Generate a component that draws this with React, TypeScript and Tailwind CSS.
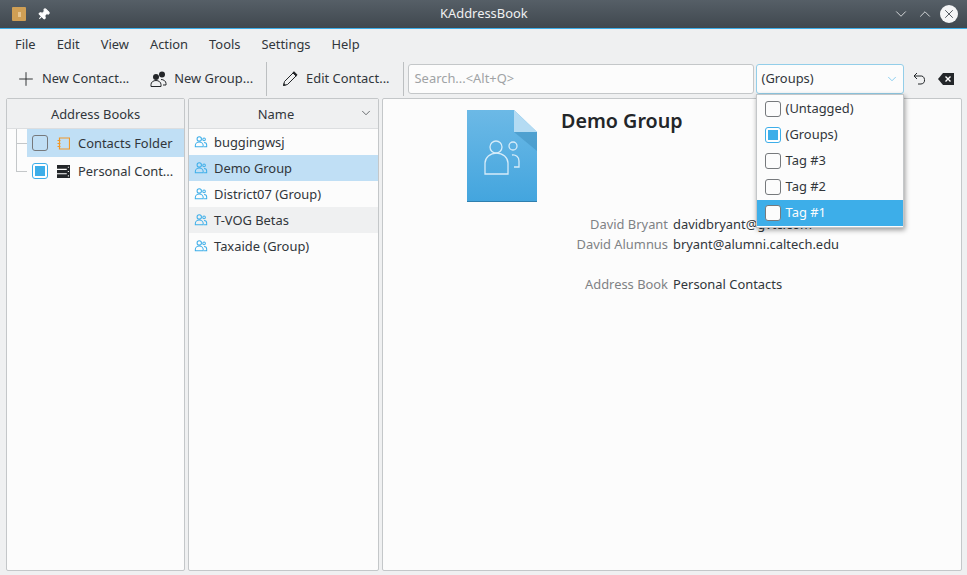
import { ChevronDown, ChevronUp, Pin, Plus, X } from "lucide-react";

const MENU = ["File", "Edit", "View", "Action", "Tools", "Settings", "Help"];

const GROUPS = [
  { name: "buggingwsj", bg: "" },
  { name: "Demo Group", bg: "bg-[#c0dff5]" },
  { name: "District07 (Group)", bg: "" },
  { name: "T-VOG Betas", bg: "bg-[#eff0f1]" },
  { name: "Taxaide (Group)", bg: "" },
];

const TAGS = ["(Untagged)", "(Groups)", "Tag #3", "Tag #2", "Tag #1"];

function PeopleIcon({ className }: { className?: string }) {
  return (
    <svg viewBox="0 0 16 16" fill="none" stroke="currentColor" strokeWidth="1.15" className={className}>
      <circle cx="6" cy="4.5" r="2.5" />
      <circle cx="11.5" cy="5" r="1.5" />
      <path d="M1.5 13.5v-1.5a4 3.5 0 0 1 9 0v1.5z" />
      <path d="M11.5 8.5a3 3 0 0 1 3 3v2h-3" />
    </svg>
  );
}

function Check({ checked, clear }: { checked?: boolean; clear?: boolean }) {
  return (
    <span
      className={`flex h-[16px] w-[16px] shrink-0 items-center justify-center rounded-[3px] border ${
        checked
          ? "border-[#3daee9] bg-white"
          : clear
            ? "border-[#76797c] bg-transparent"
            : "border-[#76797c] bg-[#fcfcfc]"
      }`}
    >
      {checked && <span className="h-[10px] w-[10px] bg-[#3daee9]" />}
    </span>
  );
}

export default function App() {
  return (
    <div className="flex h-[575px] w-[967px] flex-col overflow-hidden bg-[#eff0f1] font-['Noto_Sans',sans-serif] text-[12.9px] text-[#31363b]">
      {/* title bar */}
      <div className="flex h-[29px] shrink-0 items-center justify-between border-b border-[#3daee9] bg-gradient-to-b from-[#565f67] to-[#40484f] pl-[12px] pr-[9px] text-[#eff0f1]">
        <div className="flex w-[80px] items-center gap-[11px]">
          <span className="flex h-[14px] w-[14px] items-center justify-center rounded-[1px] bg-[#cf9f55]">
            <span className="h-[5px] w-[3px] bg-[#e6c590]" />
          </span>
          <Pin size={13} fill="white" className="rotate-45 text-white" />
        </div>
        <span className="ml-[348px]">KAddressBook</span>
        <div className="ml-auto flex items-center gap-[6px]">
          <ChevronDown size={18} strokeWidth={1.1} />
          <ChevronUp size={18} strokeWidth={1.1} />
          <span className="flex h-[18px] w-[18px] items-center justify-center rounded-full bg-[#f4f5f6] text-[#40484f]">
            <X size={14} strokeWidth={1.5} />
          </span>
        </div>
      </div>

      {/* menu */}
      <div className="flex h-[31px] shrink-0 items-center gap-[21px] pl-[15px]">
        {MENU.map((m) => (
          <span key={m}>{m}</span>
        ))}
      </div>

      {/* toolbar */}
      <div className="flex h-[37px] shrink-0 items-center pl-[15px] pr-[11px] pt-px">
        <Plus size={22} strokeWidth={1} className="text-[#232629]" />
        <span className="ml-[5px]">New Contact...</span>
        <svg viewBox="0 0 17 17" className="ml-[21px] h-[17px] w-[17px] text-[#232629]">
          <circle cx="6" cy="6" r="3" fill="currentColor" />
          <circle cx="12" cy="3.5" r="3" fill="currentColor" />
          <path fill="none" stroke="currentColor" d="M1 15.5v-2a5 4 0 0 1 10 0v2z" />
          <path fill="none" stroke="currentColor" d="M11 8.5a5 4 0 0 1 5 4v1.5h-3" />
        </svg>
        <span className="ml-[7px]">New Group...</span>
        <span className="mx-[13px] h-[34px] w-px bg-[#bcbfc1]" />
        <svg viewBox="0 0 16 16" className="ml-[2px] h-[16px] w-[16px] text-[#232629]">
          <path fill="none" stroke="currentColor" d="M1.5 14.5l1-4L11 2l3 3-8.5 8.5z" />
          <path fill="currentColor" d="M10.5 1.5l1.5-1.2 3.5 3.5-1.2 1.7zM1 15l.8-3 2.2 2.2z" />
        </svg>
        <span className="ml-[8px]">Edit Contact...</span>
        <span className="ml-[13px] h-[34px] w-px bg-[#bcbfc1]" />
        <div className="ml-[4px] flex h-[30px] w-[346px] items-center rounded-[3px] border border-[#c4c7c9] bg-[#fcfcfc] pl-[6px] text-[#a0a3a5]">
          Search...&lt;Alt+Q&gt;
        </div>
        <div className="relative ml-[2px] flex h-[30px] w-[148px] items-center justify-between rounded-[3px] border border-[#93cee9] bg-[#fcfcfc] pl-[5px] pr-[4px]">
          <span>(Groups)</span>
          <ChevronDown size={14} strokeWidth={1} className="text-[#3daee9]" />
          {/* tag popup */}
          <div className="absolute left-[-1px] top-[29px] z-10 w-[148px] border border-[#c4c7c9] bg-[#fcfcfc] py-px shadow-[1px_2px_5px_rgba(0,0,0,0.4)]">
            {TAGS.map((t, i) => (
              <div
                key={t}
                className={`flex h-[26px] items-center gap-[5px] pl-[8px] ${i === 4 ? "bg-[#3daee9] text-[#fcfcfc]" : ""}`}
              >
                <Check checked={i === 1} />
                {t}
              </div>
            ))}
          </div>
        </div>
        <svg viewBox="0 0 14 16" fill="none" stroke="#232629" strokeWidth="1" className="ml-[8px] h-[16px] w-[14px]">
          <path d="M5 2L2 5l3 3" />
          <path d="M2 5h6a4 4 0 0 1 1 8H6" />
        </svg>
        <svg viewBox="0 0 16 12" className="ml-[12px] h-[12px] w-[16px] text-[#232629]">
          <path fill="currentColor" d="M5 0h11v12H5L0 6z" />
          <path stroke="white" strokeWidth="1.4" d="M7.5 3.5l5 5m0-5l-5 5" />
        </svg>
      </div>

      {/* panels */}
      <div className="flex min-h-0 flex-1 gap-[3px] pb-[4px] pl-[6px] pr-[5px] pt-px">
        <div className="flex w-[179px] shrink-0 flex-col rounded-[2px] border border-[#c4c7c9] bg-[#fcfcfc]">
          <div className="flex h-[30px] shrink-0 items-center justify-center border-b border-[#dcdee0] bg-[#eff0f1] pt-[2px]">
            Address Books
          </div>
          <div className="relative">
            <span className="absolute left-[9px] top-0 h-[42px] w-px bg-[#c4c7c9]" />
            <span className="absolute left-[9px] top-[14px] h-px w-[11px] bg-[#c4c7c9]" />
            <span className="absolute left-[9px] top-[42px] h-px w-[11px] bg-[#c4c7c9]" />
            <div className="ml-[20px] flex h-[28px] items-center bg-[#c0dff5] pl-[5px]">
              <Check clear />
              <svg viewBox="0 1 13 12" fill="none" stroke="#f0982a" strokeWidth="1.2" className="ml-[9px] h-[13px] w-[13px]">
                <path d="M2.5 1.5h10v11h-10zM0.5 4h3M0.5 7h3M0.5 10h3" />
              </svg>
              <span className="ml-[8px] pt-px">Contacts Folder</span>
            </div>
            <div className="ml-[20px] flex h-[28px] items-center pl-[5px]">
              <Check checked />
              <svg viewBox="1 1 12 12" className="ml-[9px] h-[13px] w-[13px]">
                <path fill="#232629" d="M1 1h12v12H1z" />
                <path stroke="white" strokeWidth="1" d="M1 5h9M1 9h9M11 3h1M11 7h1M11 11h1" />
              </svg>
              <span className="ml-[8px] pt-px">Personal Cont...</span>
            </div>
          </div>
        </div>

        <div className="flex w-[191px] shrink-0 flex-col rounded-[2px] border border-[#c4c7c9] bg-[#fcfcfc]">
          <div className="relative flex h-[30px] shrink-0 items-center justify-center border-b border-[#dcdee0] bg-[#eff0f1] pr-[15px] pt-[2px]">
            Name
            <ChevronDown size={14} strokeWidth={1.2} className="absolute right-[5px] top-[7px]" />
          </div>
          {GROUPS.map((g) => (
            <div key={g.name} className={`flex h-[26px] items-center pl-[5px] ${g.bg}`}>
              <PeopleIcon className="h-[14px] w-[14px] text-[#3daee9]" />
              <span className="ml-[6px] pt-px">{g.name}</span>
            </div>
          ))}
        </div>

        <div className="flex min-w-0 flex-1 flex-col rounded-[2px] border border-[#c4c7c9] bg-[#fcfcfc]">
          <div className="flex pl-[84px] pt-[11px]">
            <svg viewBox="0 0 70 92" className="h-[92px] w-[70px] shrink-0">
              <defs>
                <linearGradient id="doc" x1="0" y1="0" x2="0" y2="1">
                  <stop offset="0" stopColor="#6cb9e6" />
                  <stop offset="1" stopColor="#43a5de" />
                </linearGradient>
              </defs>
              <path fill="url(#doc)" d="M0 0h47l23 22v70H0z" />
              <path fill="#2f7fae" d="M0 91h70v1H0z" />
              <path fill="#b4dbf3" d="M47 0l23 22H47z" />
              <path fill="#3f8fc0" fillOpacity="0.55" d="M47 22h23v19z" />
              <g fill="none" stroke="#d6ecf9" strokeWidth="1.3">
                <circle cx="29" cy="37" r="6" />
                <circle cx="46" cy="36" r="4" />
                <path d="M18 64V53a11 9.5 0 0 1 23 0v11z" />
                <path d="M45 45a6 6 0 0 1 7 6v6h-5" />
              </g>
            </svg>
            <h1 className="ml-[24px] mt-[-4px] text-[19.7px] font-semibold leading-[30px] text-[#232629]">Demo Group</h1>
          </div>
          <div className="mt-[12px] grid grid-cols-[285px_1fr] gap-x-[5px] leading-[20px]">
            <span className="text-right text-[#7f8285]">David Bryant</span>
            <span>davidbryant@gvtc.com</span>
            <span className="text-right text-[#7f8285]">David Alumnus</span>
            <span>bryant@alumni.caltech.edu</span>
            <span className="mt-[20px] text-right text-[#7f8285]">Address Book</span>
            <span className="mt-[20px]">Personal Contacts</span>
          </div>
        </div>
      </div>
    </div>
  );
}
